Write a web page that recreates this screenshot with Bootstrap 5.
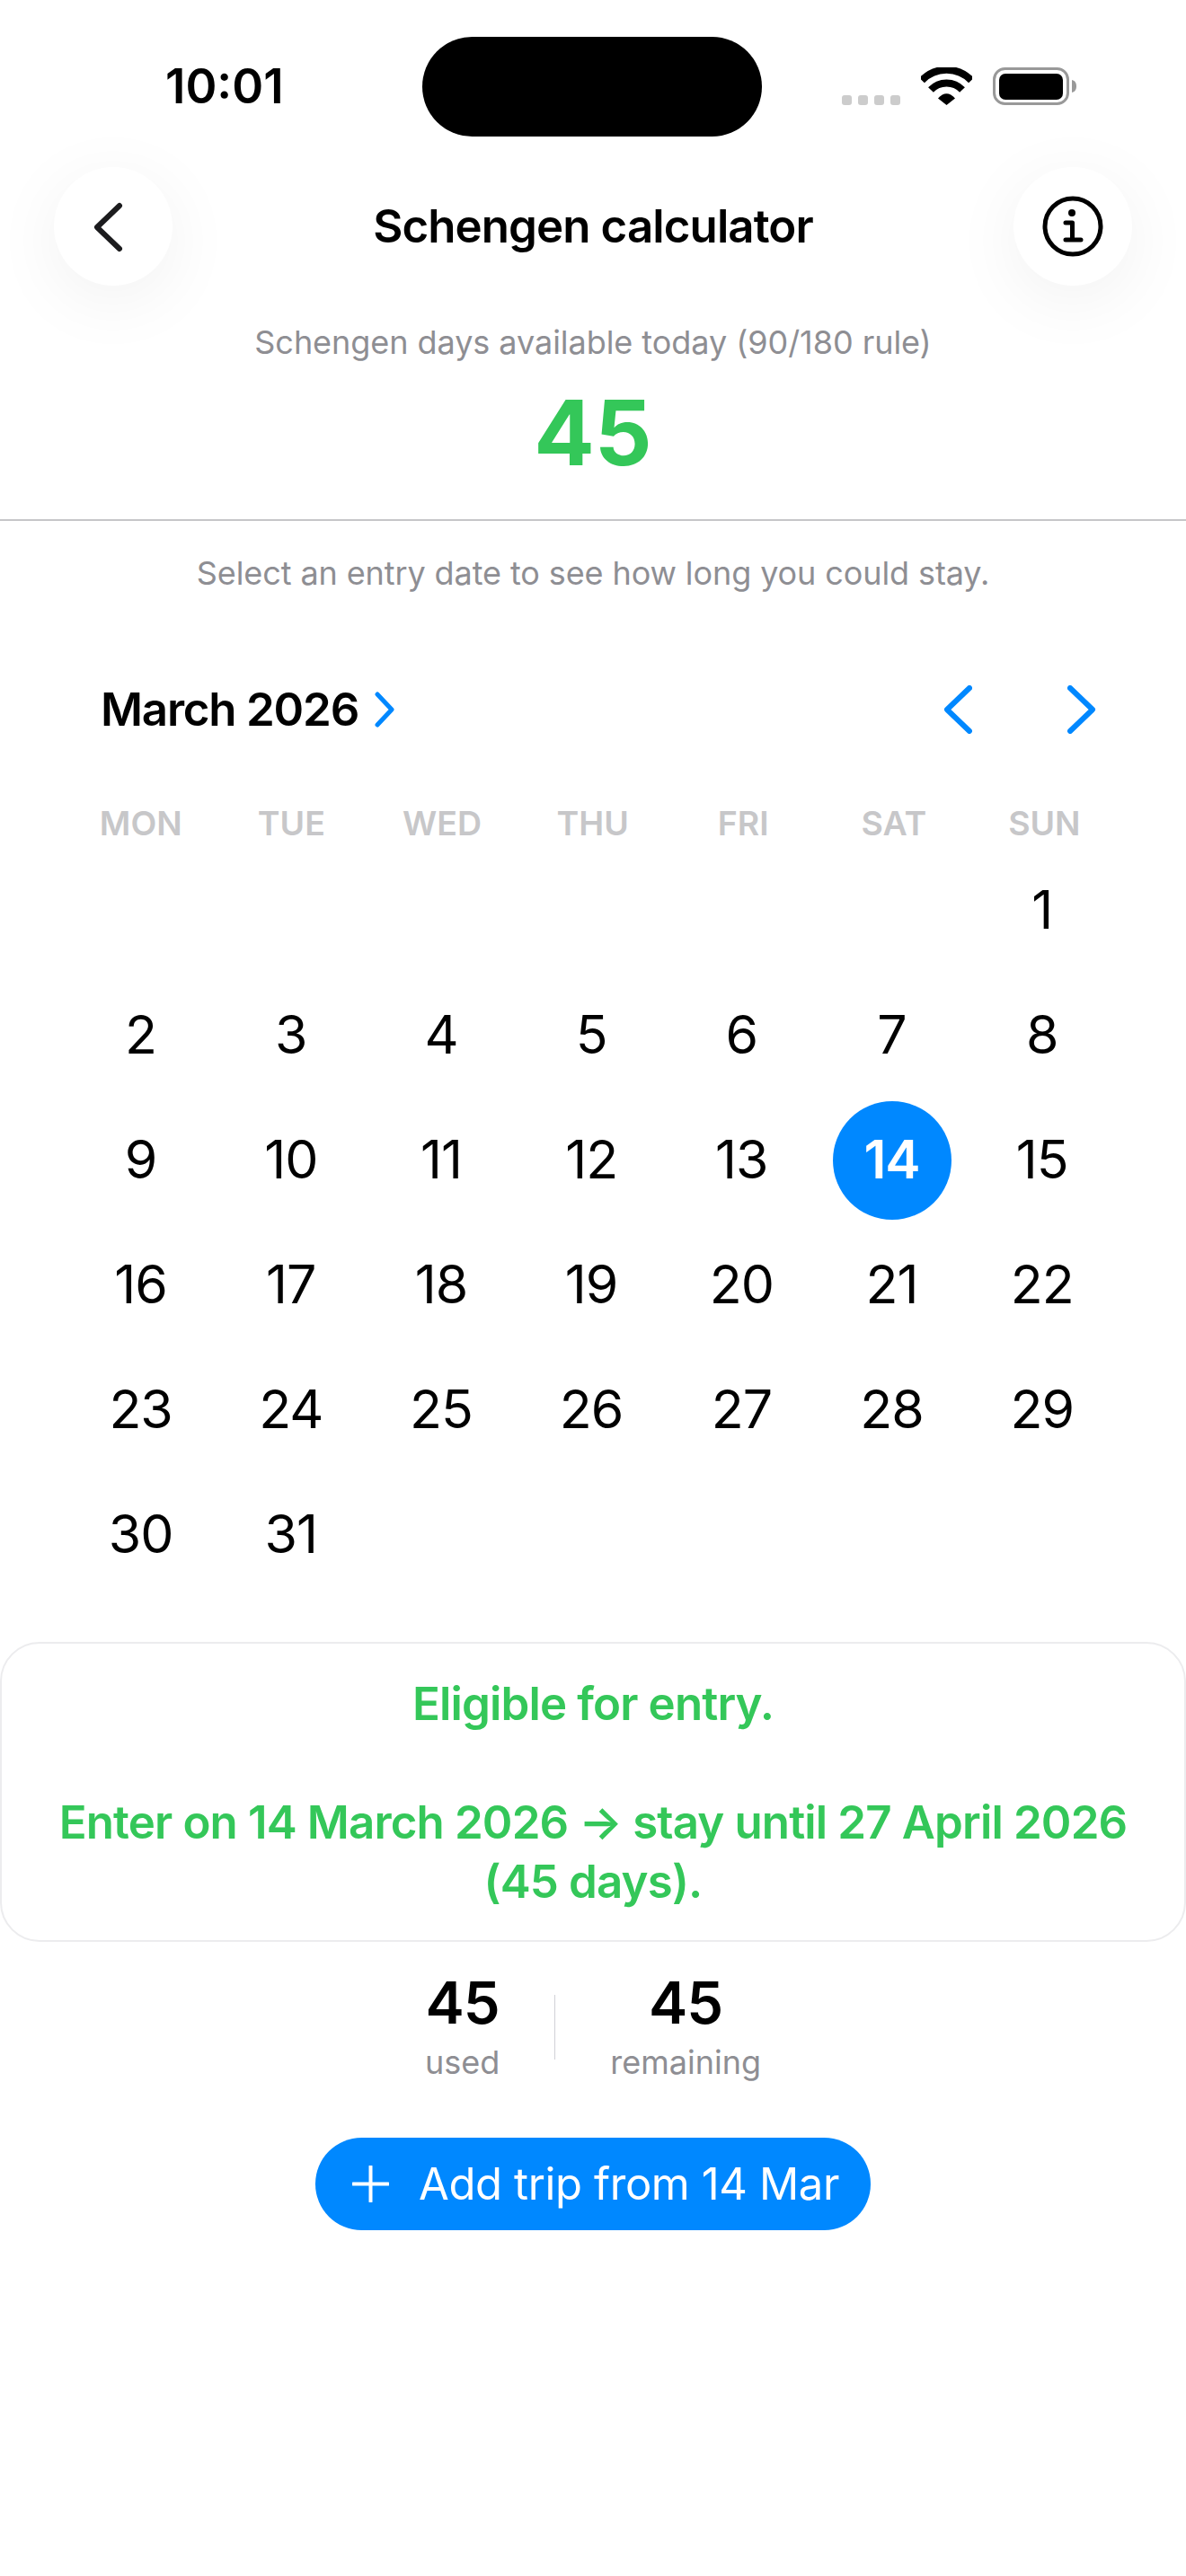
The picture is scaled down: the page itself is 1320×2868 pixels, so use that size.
<!DOCTYPE html>
<html lang="en">
<head>
  <meta charset="UTF-8">
  <meta name="viewport" content="width=device-width, initial-scale=1.0">
  <title>Schengen calculator</title>
  <link href="https://cdn.jsdelivr.net/npm/bootstrap@5.3.2/dist/css/bootstrap.min.css" rel="stylesheet">
  <style>
    body {
      background: #fff;
      color: #000;
      font-family: Inter, "Liberation Sans", sans-serif;
      height: 2868px;
      overflow: hidden;
    }
    .status-bar { padding: 41px 0 0 184px; height: 152px; }
    .status-time { font-size: 53px; font-weight: 600; width: 286px; letter-spacing: 0; line-height: 111px; flex-shrink: 0; }
    .island { width: 378px; height: 111px; border-radius: 56px; background: #000; }
    .status-icons { margin-left: 89px; gap: 23px; padding-top: 34px; }
    .sig-dots { gap: 7px; margin-top: 31px; }
    .sig-dots span { width: 11px; height: 11px; border-radius: 3px; background: #ccc; }
    .top-bar { padding: 0 60px; margin-top: 34px; height: 132px; }
    .round-btn { width: 132px; height: 132px; border-radius: 50%; background: #fff; box-shadow: 0 16px 80px rgba(0, 0, 0, .06); padding: 0; border: 0; }
    .page-title { font-size: 51px; font-weight: 600; letter-spacing: -.9px; margin: 0; }
    .sub-text { font-size: 36px; line-height: 44px; color: #8e8e93; margin: 0; letter-spacing: -.05px; }
    .big-num { font-size: 100px; line-height: 100px; font-weight: 700; color: #34c759; margin-top: 29px; }
    .head-block { padding-top: 41px; height: 262px; border-bottom: 2px solid #c6c6c8; }
    .hint { margin-top: 36px; letter-spacing: -.1px; }
    .month-row { margin-top: 100px; padding: 0 100px 0 112px; height: 60px; }
    .month-name { font-size: 51px; font-weight: 600; letter-spacing: -1.2px; margin-right: 17px; }
    .next-gap { gap: 106px; }
    .cal-grid { display: grid; grid-template-columns: repeat(7, 167.2px); padding-left: 73px; }
    .week-grid { margin-top: 77px; height: 40px; grid-template-columns: repeat(7, 167.6px); }
    .week-grid div { font-size: 37.5px; line-height: 40px; font-weight: 600; color: #c7c7c9; text-align: center; }
    .day-grid { margin-top: 7px; grid-auto-rows: 139px; }
    .day-cell { font-size: 59px; display: flex; align-items: center; justify-content: center; letter-spacing: -1px; }
    .day-cell.picked span { width: 132px; height: 132px; border-radius: 50%; background: #0088ff; color: #fff; font-weight: 600; display: flex; align-items: center; justify-content: center; }
    .result-box { margin-top: 50px; border: 2px solid #ececee; border-radius: 44px; padding: 34px 30px 32px; background: #fff; font-size: 51px; line-height: 66px; font-weight: 600; color: #34c759; text-align: center; letter-spacing: -.85px; }
    .stats-row { margin-top: 33px; gap: 61px; }
    .stat-item { text-align: center; }
    .stat-num { font-size: 65px; line-height: 70px; font-weight: 600; letter-spacing: -1px; }
    .stat-label { font-size: 36px; line-height: 44px; margin-top: 9px; color: #8e8e93; }
    .stat-line { width: 1px; height: 72px; background: #d1d1d6; margin-top: 26px; }
    .add-btn { margin-top: 62px; width: 618px; height: 103px; border-radius: 52px; background: #0088ff; border: 0; color: #fff; font-size: 49px; gap: 33px; padding: 0 0 0 6px; letter-spacing: -.4px; }
    .add-btn:hover { background: #0088ff; color: #fff; }
  </style>
</head>
<body>

<div class="status-bar d-flex">
  <div class="status-time">10:01</div>
  <div class="island flex-shrink-0"></div>
  <div class="status-icons d-flex align-self-start">
    <div class="sig-dots d-flex"><span></span><span></span><span></span><span></span></div>
    <svg width="57" height="42" viewBox="0 0 57 42">
      <path d="M1 14.500 A38 38 0 0 1 56 14.500" fill="none" stroke="#000" stroke-width="8"/>
      <path d="M11 25 A24 24 0 0 1 46 25" fill="none" stroke="#000" stroke-width="8"/>
      <path d="M19 34.500 Q28.500 24 38 34.500 L28.500 42 Z"/>
    </svg>
    <svg width="94" height="43" viewBox="0 0 94 43">
      <rect x="1.500" y="1.500" width="82" height="39" rx="12" fill="none" stroke="#999" stroke-width="3"/>
      <rect x="7" y="7" width="71" height="29" rx="7"/>
      <path d="M88 14 C92 15 93 18 93 21 C93 24 92 27 88 28 Z" fill="#999"/>
    </svg>
  </div>
</div>

<div class="top-bar d-flex justify-content-between align-items-center">
  <button class="round-btn" type="button" aria-label="Back">
    <svg width="132" height="132" viewBox="0 0 132 132"><path d="M73 43 L48 67 L73 91" fill="none" stroke="#1c1c1e" stroke-width="6" stroke-linecap="round" stroke-linejoin="round"/></svg>
  </button>
  <h1 class="page-title">Schengen calculator</h1>
  <button class="round-btn" type="button" aria-label="Info">
    <svg width="132" height="132" viewBox="0 0 132 132">
      <circle cx="66" cy="66" r="31" fill="none" stroke="#000" stroke-width="5"/>
      <circle cx="65" cy="51" r="4"/>
      <path d="M58 62 H65.500 V81 M58 81 H75" fill="none" stroke="#000" stroke-width="5" stroke-linecap="round" stroke-linejoin="round"/>
    </svg>
  </button>
</div>

<div class="head-block text-center">
  <p class="sub-text">Schengen days available today (90/180 rule)</p>
  <div class="big-num">45</div>
</div>
<p class="sub-text hint text-center">Select an entry date to see how long you could stay.</p>

<div class="month-row d-flex align-items-center justify-content-between">
  <div class="d-flex align-items-center">
    <span class="month-name">March 2026</span>
    <svg width="24" height="40" viewBox="0 0 24 40"><path d="M4 3 L20 20 L4 37" fill="none" stroke="#0088ff" stroke-width="5" stroke-linecap="round" stroke-linejoin="round"/></svg>
  </div>
  <div class="d-flex next-gap">
    <svg width="32" height="54" viewBox="0 0 32 54"><path d="M29 3 L4 27 L29 51" fill="none" stroke="#0088ff" stroke-width="6" stroke-linecap="round" stroke-linejoin="round"/></svg>
    <svg width="32" height="54" viewBox="0 0 32 54"><path d="M3 3 L28 27 L3 51" fill="none" stroke="#0088ff" stroke-width="6" stroke-linecap="round" stroke-linejoin="round"/></svg>
  </div>
</div>

<div class="cal-grid week-grid">
  <div>MON</div><div>TUE</div><div>WED</div><div>THU</div><div>FRI</div><div>SAT</div><div>SUN</div>
</div>
<div class="cal-grid day-grid" id="days"></div>

<div class="result-box">
  Eligible for entry.<br><br>Enter on 14 March 2026 → stay until 27 April 2026 (45 days).
</div>

<div class="stats-row d-flex justify-content-center">
  <div class="stat-item">
    <div class="stat-num">45</div>
    <div class="stat-label">used</div>
  </div>
  <div class="stat-line"></div>
  <div class="stat-item">
    <div class="stat-num">45</div>
    <div class="stat-label">remaining</div>
  </div>
</div>

<div class="d-flex justify-content-center">
  <button class="btn add-btn d-flex align-items-center justify-content-center" type="button">
    <svg width="41" height="41" viewBox="0 0 41 41"><path d="M20.500 1 V40 M1 20.500 H40" fill="none" stroke="#fff" stroke-width="4" stroke-linecap="round"/></svg>
    <span>Add trip from 14 Mar</span>
  </button>
</div>

<script>
  // March 2026 starts on a Sunday
  const days = document.getElementById("days");
  for (let i = 0; i < 6; i++) days.innerHTML += '<div class="day-cell"></div>';
  for (let d = 1; d <= 31; d++) {
    const picked = d === 14 ? " picked" : "";
    days.innerHTML += `<div class="day-cell${picked}"><span>${d}</span></div>`;
  }
</script>

</body>
</html>
